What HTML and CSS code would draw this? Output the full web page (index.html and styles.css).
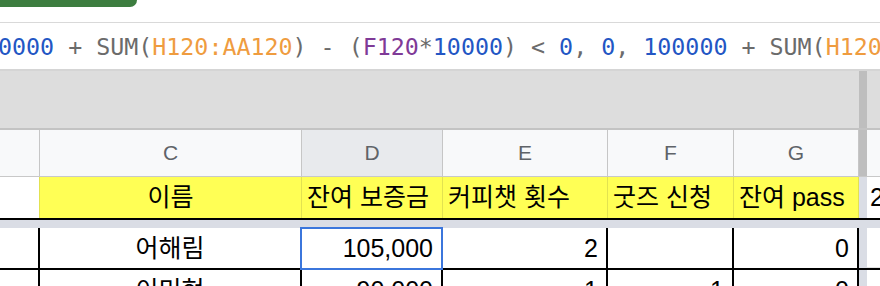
FILE: index.html
```html
<!doctype html>
<html lang="ko">
  <head>
    <meta charset="UTF-8" />
    <meta name="viewport" content="width=device-width, initial-scale=1.0" />
    <title>시트</title>
    <link rel="stylesheet" href="styles.css">
  </head>
  <body>
    <div class="sheet">
      <div class="topbar"><div class="share-btn"></div></div>

      <div class="formula-bar">
        <div class="formula"><span class="num">0000</span><span class="op"> + SUM(</span><span class="ref">H120:AA120</span><span class="op">) - (</span><span class="ref2">F120</span><span class="op">*</span><span class="num">10000</span><span class="op">) &lt; </span><span class="num">0</span><span class="op">, </span><span class="num">0</span><span class="op">, </span><span class="num">100000</span><span class="op"> + SUM(</span><span class="ref">H120:AA120</span><span class="op">) - (</span><span class="ref2">F120</span><span class="op">*</span><span class="num">10000</span><span class="op">))</span></div>
      </div>

      <div class="row gray-area">
        <div class="span6"></div>
        <div class="freeze dark"></div>
        <div></div>
      </div>

      <div class="row col-head">
        <div class="letter"></div>
        <div class="letter">C</div>
        <div class="letter active">D</div>
        <div class="letter">E</div>
        <div class="letter">F</div>
        <div class="letter">G</div>
        <div class="freeze dark"></div>
        <div class="letter last"></div>
      </div>

      <div class="row title-row">
        <div class="cell blank"></div>
        <div class="cell hl center">이름</div>
        <div class="cell hl">잔여 보증금</div>
        <div class="cell hl">커피챗 횟수</div>
        <div class="cell hl">굿즈 신청</div>
        <div class="cell hl">잔여 pass</div>
        <div class="freeze"></div>
        <div class="cell extra">2024</div>
      </div>

      <div class="row band">
        <div class="span6"></div>
        <div class="freeze"></div>
        <div></div>
      </div>

      <div class="row data-row">
        <div class="cell"></div>
        <div class="cell center">어해림</div>
        <div class="cell right selected">105,000</div>
        <div class="cell right">2</div>
        <div class="cell right"></div>
        <div class="cell right">0</div>
        <div class="freeze"></div>
        <div class="cell extra"></div>
      </div>

      <div class="row data-row">
        <div class="cell"></div>
        <div class="cell center">이미현</div>
        <div class="cell right">90,000</div>
        <div class="cell right">1</div>
        <div class="cell right">1</div>
        <div class="cell right">0</div>
        <div class="freeze"></div>
        <div class="cell extra"></div>
      </div>
    </div>
  </body>
</html>
```

FILE: styles.css
```css
* {
  margin: 0;
  padding: 0;
  box-sizing: border-box;
}

body {
  font-family: "Liberation Sans", "Noto Sans CJK KR", sans-serif;
  background: #ffffff;
  width: 880px;
  height: 286px;
  overflow: hidden;
}

.sheet {
  width: 880px;
}

/* top toolbar strip */
.topbar {
  height: 23px;
  border-bottom: 1px solid #d9d9d9;
}

.share-btn {
  width: 137px;
  height: 7px;
  background: #3c7d3f;
  border-bottom-right-radius: 7px;
}

/* formula bar */
.formula-bar {
  height: 48px;
  border-bottom: 2px solid #d5d5d5;
  overflow: hidden;
}

.formula {
  font-family: "DejaVu Sans Mono", monospace;
  font-size: 23.3px;
  line-height: 46px;
  padding-top: 1px;
  margin-left: -2px;
  white-space: pre;
}

.num {
  color: #2356c4;
}

.op {
  color: #6b6b6b;
}

.ref {
  color: #ef9c3f;
}

.ref2 {
  color: #7f3a97;
}

/* grid rows */
.row {
  display: grid;
  grid-template-columns: 40px 262px 141px 165px 126px 125px 8px 1fr;
}

.span6 {
  grid-column: span 6;
}

.freeze {
  background: #dadde5;
}

.freeze.dark {
  background: #bebebe;
}

.gray-area {
  height: 59px;
  background: #dddddd;
  border-bottom: 2px solid #c3c3c3;
}

.col-head {
  height: 47px;
  background: #f8f9fa;
  border-bottom: 1px solid #c8c8c8;
}

.letter {
  border-right: 1px solid #c6c6c6;
  color: #5f6368;
  font-size: 21px;
  line-height: 46px;
  text-align: center;
}

.letter.active {
  background: #e8eaed;
}

.letter.last {
  border-right: none;
}

.cell {
  font-size: 25px;
  color: #000000;
  padding: 0 8px;
  white-space: nowrap;
  overflow: hidden;
}

.center {
  text-align: center;
}

.right {
  text-align: right;
}

.title-row {
  height: 43px;
  border-bottom: 2px solid #000000;
}

.title-row .cell {
  line-height: 41px;
  padding: 0 5px;
}

.title-row .blank {
  border-right: 1px solid #e2e250;
}

.title-row .hl {
  background: #ffff55;
  border-right: 1px solid #e2e250;
}

.title-row .extra {
  padding: 0 3px;
}

.band {
  height: 8px;
  background: #dadde5;
}

.data-row {
  height: 42px;
  border-bottom: 2px solid #000000;
}

.data-row .cell {
  line-height: 40px;
  border-right: 2px solid #000000;
}

.data-row .extra {
  border-right: none;
  border-bottom: 1px solid #e2e2e2;
}

.data-row:last-child .extra {
  border-bottom: none;
}

.data-row .selected {
  position: relative;
  overflow: visible;
}

/* selection outline around active cell */
.data-row .selected::after {
  content: "";
  position: absolute;
  top: -1px;
  left: -2px;
  right: -2px;
  bottom: -2px;
  border: 2px solid #3b76dc;
}
```
